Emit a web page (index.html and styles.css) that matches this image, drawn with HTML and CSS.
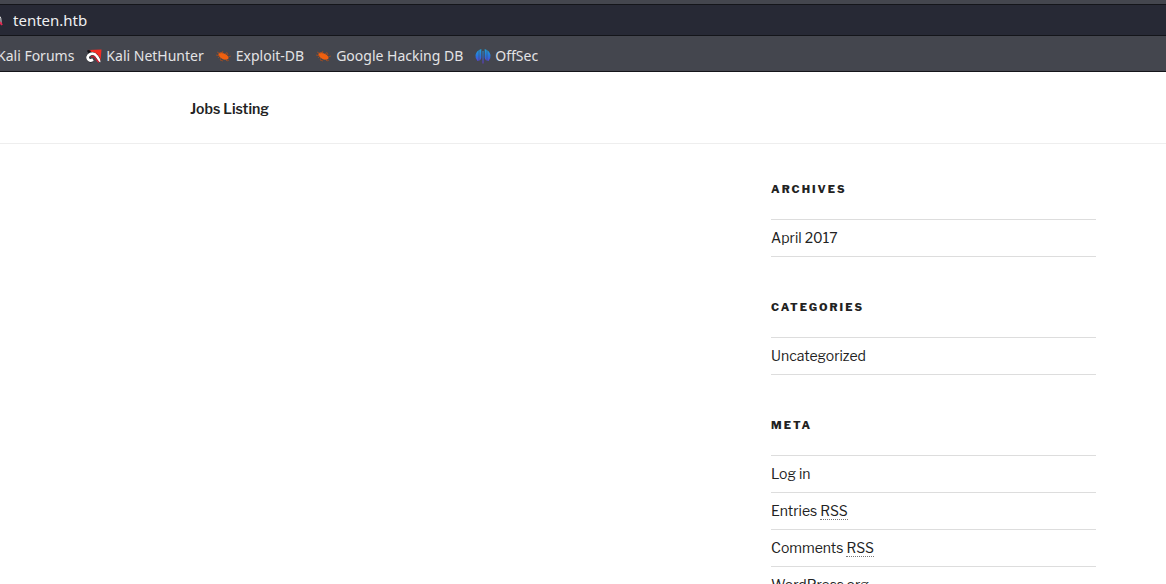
FILE: index.html
```html
<!DOCTYPE html>
<html lang="en">
<head>
<meta charset="utf-8">
<title>tenten.htb</title>
<link rel="stylesheet" href="styles.css">
</head>
<body>
<header class="browser">
  <div class="address-row">
    <svg class="lock" width="3" height="16" viewBox="0 0 3 16" aria-hidden="true"><path d="M0 4.500Q1 5.500 1 9V12" fill="none" stroke="#ddd" stroke-width="1"/><path d="M0 10L2 13" stroke="#e22850" stroke-width="2"/></svg>
    <input class="address" type="text" value="tenten.htb" aria-label="Address">
  </div>
  <nav class="bookmarks" aria-label="Bookmarks">
    <a class="bookmark bookmark-cut" href="#">Kali Forums</a>
    <a class="bookmark" href="#">
      <svg class="icon" width="16" height="16" viewBox="0 0 16 16" aria-hidden="true"><path d="M2 2L15.500 1.500L14.500 13L9 6Z" fill="#f52b24"/><path d="M1 3Q2 1 5 3L3 6ZM2 13L7 15L4 14.500Z" fill="#16171b"/><path d="M12.500 13.500Q14 12 11 8.500Q8 4.500 4.500 6Q0 8.500 2.500 11.500Q4 13.500 7 11.500" fill="none" stroke="#16171b" stroke-width="3.200"/><path d="M13 14Q13.500 12 11 8.500Q8 4.500 4.500 6Q0 8.500 2.500 11.500Q4 13.500 7 11.500" fill="none" stroke="#fff" stroke-width="2.800"/><path d="M5 9Q8 7 10 11L13 14.500" fill="none" stroke="#c51f32" stroke-width="1.500"/></svg>
      Kali NetHunter</a>
    <a class="bookmark" href="#">
      <svg class="icon" width="16" height="16" viewBox="0 0 16 16" aria-hidden="true"><path d="M2.500 5.500Q4.500 3.500 8 5.500Q11 6 12.500 9Q13 11 11 11.500Q7.500 12.500 5 10Q2 8 2.500 5.500Z" fill="#f0600f"/><path d="M1 4L4 5.500L7 3.500L6 6M0 7L4 8L2 10M5 10L4 12L7 13M9 6L11 4.500L12 7M12 9L15 8M9 11L11 13L13 12" fill="none" stroke="#b54d18" stroke-width=".7"/></svg>
      Exploit-DB</a>
    <a class="bookmark" href="#">
      <svg class="icon" width="16" height="16" viewBox="0 0 16 16" aria-hidden="true"><path d="M2.500 5.500Q4.500 3.500 8 5.500Q11 6 12.500 9Q13 11 11 11.500Q7.500 12.500 5 10Q2 8 2.500 5.500Z" fill="#f0600f"/><path d="M1 4L4 5.500L7 3.500L6 6M0 7L4 8L2 10M5 10L4 12L7 13M9 6L11 4.500L12 7M12 9L15 8M9 11L11 13L13 12" fill="none" stroke="#b54d18" stroke-width=".7"/></svg>
      Google Hacking DB</a>
    <a class="bookmark" href="#">
      <svg class="icon" width="16" height="16" viewBox="0 0 16 16" aria-hidden="true"><defs><linearGradient id="wave" gradientUnits="userSpaceOnUse" x1="0" y1="0" x2="0" y2="16"><stop offset="0" stop-color="#20a8d8"/><stop offset=".5" stop-color="#2874dc"/><stop offset="1" stop-color="#6a30d2"/></linearGradient></defs><path d="M6.300 1V10Q5.500 13 2.500 13Q0 10.500 .5 7Q1.500 2.500 6.300 1ZM7.500 3H8.500V15.500H7.500ZM9.700 1Q14.500 2.500 15.500 7Q16 10.500 13.500 13Q10.500 13 9.700 10Z" fill="url(#wave)"/><path d="M4 2V13M12 2V13" stroke="#44464e" stroke-width=".5"/></svg>
      OffSec</a>
  </nav>
</header>
<nav class="site-nav" aria-label="Site"><a class="site-link" href="#">Jobs Listing</a></nav>
<main class="content">
  <aside class="sidebar">
    <section class="widget">
      <h2 class="widget-title">Archives</h2>
      <ul class="widget-list"><li class="widget-item"><a href="#">April 2017</a></li></ul>
    </section>
    <section class="widget">
      <h2 class="widget-title">Categories</h2>
      <ul class="widget-list"><li class="widget-item"><a href="#">Uncategorized</a></li></ul>
    </section>
    <section class="widget">
      <h2 class="widget-title">Meta</h2>
      <ul class="widget-list">
        <li class="widget-item"><a href="#">Log in</a></li>
        <li class="widget-item"><a href="#">Entries <abbr title="Really Simple Syndication">RSS</abbr></a></li>
        <li class="widget-item"><a href="#">Comments <abbr title="Really Simple Syndication">RSS</abbr></a></li>
        <li class="widget-item"><a href="#">WordPress.org</a></li>
      </ul>
    </section>
  </aside>
</main>
</body>
</html>
```
FILE: styles.css
```css
* { box-sizing: border-box; }
html, body { height: 100%; }
body {
  margin: 0;
  display: flex;
  flex-direction: column;
  overflow: hidden;
  background: #fff;
  color: #222;
  font-family: "Libre Franklin", "Liberation Sans", Arial, sans-serif;
  font-size: 14px;
}
a { color: inherit; text-decoration: none; }

.browser {
  flex: none;
  padding-top: 4px;
  background: #44464e;
  border-bottom: 1px solid #14151a;
  font-family: "Noto Sans", sans-serif;
}
.address-row {
  display: flex;
  align-items: center;
  height: 32px;
  background: #272935;
  border-top: 1px solid #14151a;
  border-bottom: 1px solid #14151a;
}
.lock { flex: none; }
.address {
  flex: 1;
  min-width: 0;
  margin: 0;
  padding: 0 10px;
  border: 0;
  outline: 0;
  background: transparent;
  color: #f0f0f2;
  font: 15px/20px "Noto Sans", sans-serif;
}
.bookmarks {
  display: flex;
  align-items: center;
  gap: 12px;
  height: 35px;
  padding-top: 4px;
  color: #e3e3e5;
  font-size: 14px;
  line-height: 20px;
  white-space: nowrap;
}
.bookmark { display: flex; align-items: center; gap: 4px; }
.bookmark-cut { margin-left: -3px; }
.icon { flex: none; }

.site-nav {
  flex: none;
  padding: 27px 190px 24px;
  border-bottom: 1px solid #eee;
  font-weight: 600;
  line-height: 20px;
}
.content {
  flex: 1;
  min-height: 0;
  display: flex;
  justify-content: flex-end;
  padding: 36px 6% 0;
}
.sidebar { width: 325px; }
.widget { margin-bottom: 41px; }
.widget-title {
  margin: 0 0 20px;
  font-size: 11px;
  font-weight: 800;
  line-height: 19px;
  letter-spacing: 2px;
  text-transform: uppercase;
}
.widget-list {
  margin: 0;
  padding: 0;
  list-style: none;
  border-top: 1px solid #ddd;
}
.widget-item {
  padding: 8px 0;
  border-bottom: 1px solid #ddd;
  line-height: 20px;
}
abbr[title] { text-decoration: none; border-bottom: 1px dotted #777; }
```
